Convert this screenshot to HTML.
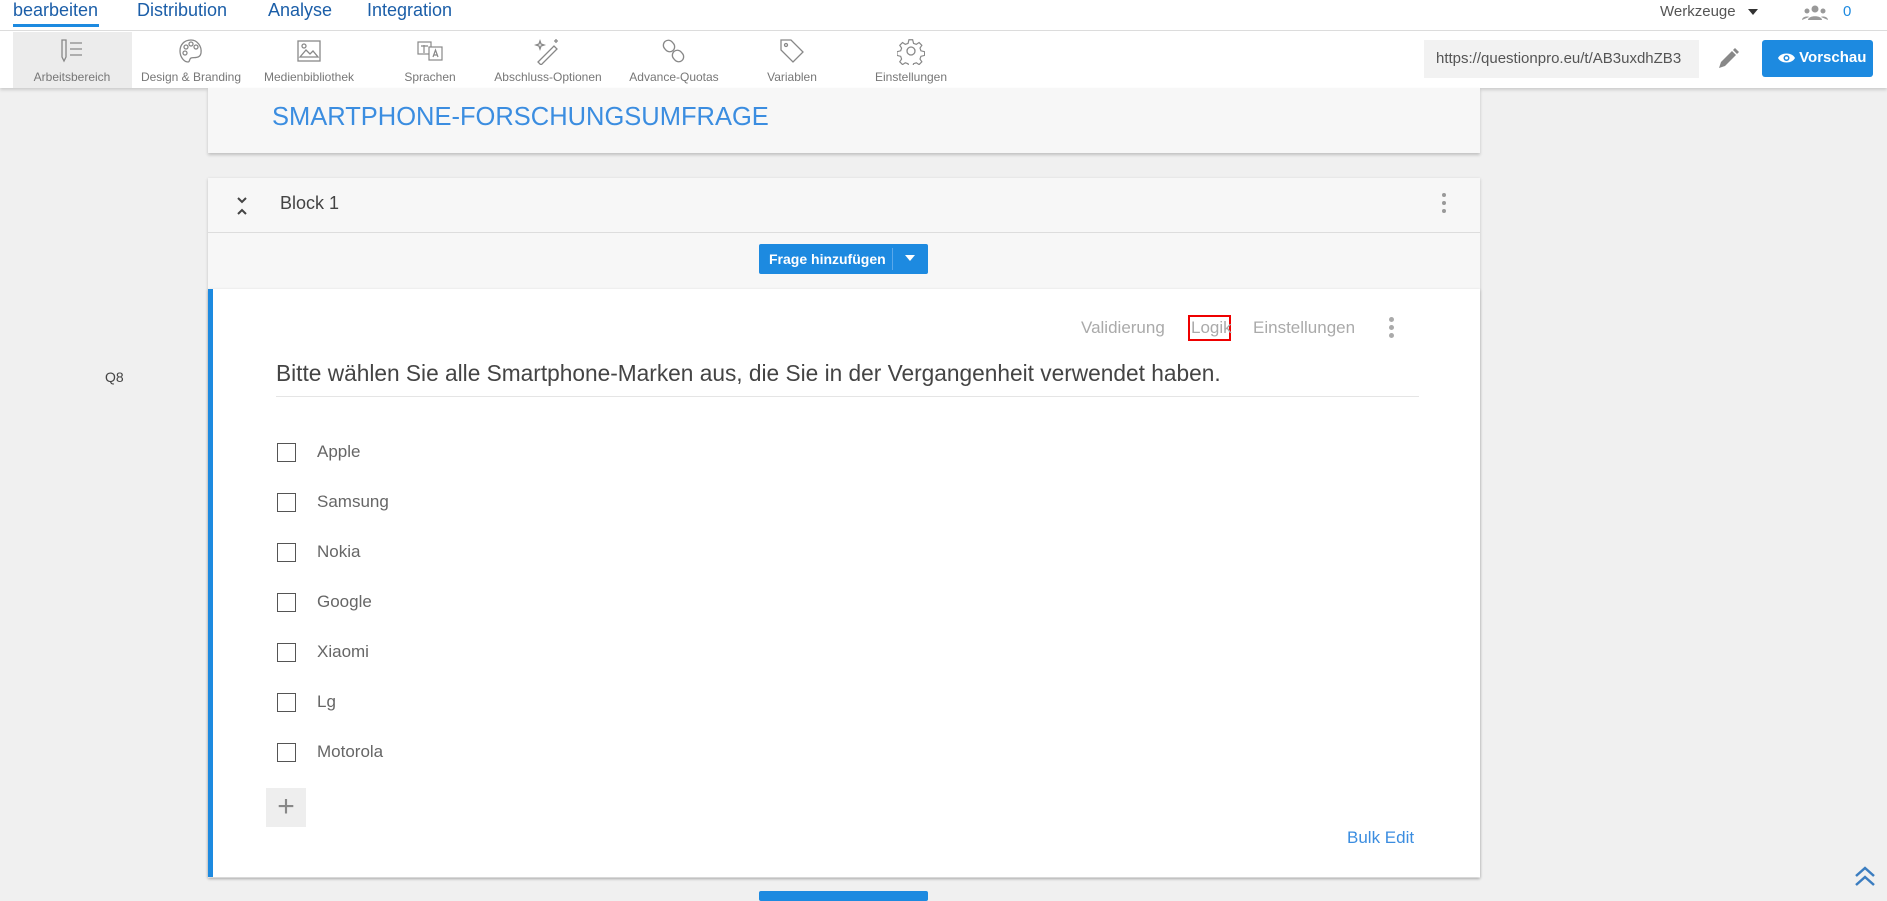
<!DOCTYPE html>
<html><head><meta charset="utf-8"><style>
*{margin:0;padding:0;box-sizing:border-box}
body{width:1887px;height:894px;overflow:hidden;background:#f0f0f0;font-family:"Liberation Sans",sans-serif;position:relative;color:#555}
.a{position:absolute;white-space:nowrap}
.tb{position:absolute;top:31px;width:110px;height:57px;text-align:center;font-size:12px;color:#777}
.tb svg{position:absolute;top:6px;left:41px}
.tb span{position:absolute;top:39px;left:0;right:0}
.opt{position:absolute;left:277px;width:19px;height:19px;border:1.5px solid #555;background:#fff}
.ol{position:absolute;left:317px;font-size:17px;color:#666}
</style></head><body>
<div class="a" style="left:0;top:0;width:1887px;height:31px;background:#fff;border-bottom:1px solid #ddd"></div>
<div class="a" style="left:13px;top:0;font-size:18px;color:#1b5ea8">bearbeiten</div>
<div class="a" style="left:13px;top:24px;width:86px;height:3px;background:#1d8ae0"></div>
<div class="a" style="left:137px;top:0;font-size:18px;color:#1b5ea8">Distribution</div>
<div class="a" style="left:268px;top:0;font-size:18px;color:#1b5ea8">Analyse</div>
<div class="a" style="left:367px;top:0;font-size:18px;color:#1b5ea8">Integration</div>
<div class="a" style="left:1660px;top:3px;font-size:15px;color:#555">Werkzeuge</div>
<div class="a" style="left:1748px;top:9px;border:5px solid transparent;border-top:6px solid #333"></div>
<svg class="a" style="left:1802px;top:4px" width="26" height="16" viewBox="0 0 26 16"><circle cx="13" cy="5" r="3.5" fill="#999"/><circle cx="5" cy="7" r="2.5" fill="#999"/><circle cx="21" cy="7" r="2.5" fill="#999"/><path d="M6 16c0-5 14-5 14 0z M0 16c0-4 7-4 7-3 M26 16c0-4-7-4-7-3" fill="#999"/></svg>
<div class="a" style="left:1843px;top:3px;font-size:15px;color:#1d8ae0">0</div>

<div class="a" style="left:0;top:31px;width:1887px;height:57px;background:#fff;box-shadow:0 2px 3px rgba(0,0,0,.15)"></div>
<div class="a" style="left:13px;top:32px;width:119px;height:56px;background:#ececec"></div>
<div class="tb" style="left:17px"><svg width="28" height="28" viewBox="0 0 28 28" fill="none" stroke="#888" stroke-width="1.3"><path d="M4 3h4v17l-2 4-2-4z M12 6h12 M12 12h12 M12 18h12"/></svg><span>Arbeitsbereich</span></div>
<div class="tb" style="left:136px"><svg width="28" height="28" viewBox="0 0 28 28" fill="none" stroke="#888" stroke-width="1.3"><path d="M14 3C7 3 3 8 3 14s4 11 8 11c2 0 1-3 3-4 3-1 9 1 10-5 1-7-4-13-10-13z"/><circle cx="9" cy="10" r="2"/><circle cx="14" cy="7" r="2"/><circle cx="19" cy="10" r="2"/><circle cx="8" cy="16" r="2"/></svg><span>Design &amp; Branding</span></div>
<div class="tb" style="left:254px"><svg width="28" height="28" viewBox="0 0 28 28" fill="none" stroke="#888" stroke-width="1.3"><rect x="3" y="4" width="22" height="20"/><path d="M5 20l6-7 4 4 3-3 5 6z"/><circle cx="9" cy="9" r="2"/></svg><span>Medienbibliothek</span></div>
<div class="tb" style="left:375px"><svg width="28" height="28" viewBox="0 0 28 28" fill="none" stroke="#888" stroke-width="1.2"><rect x="2" y="5" width="13" height="12"/><rect x="13" y="10" width="13" height="13" fill="#fff"/><path d="M5 9h7 M8 8v8 M17 20l2.5-7 2.5 7 M18 18h3"/></svg><span>Sprachen</span></div>
<div class="tb" style="left:493px"><svg width="28" height="28" viewBox="0 0 28 28" fill="none" stroke="#888" stroke-width="1.3"><path d="M4 25L20 9l3 3L7 28z M6 4l1 3 3 1-3 1-1 3-1-3-3-1 3-1z M22 2v4 M20 4h4"/></svg><span>Abschluss-Optionen</span></div>
<div class="tb" style="left:619px"><svg width="28" height="28" viewBox="0 0 28 28" fill="none" stroke="#888" stroke-width="1.3"><rect x="4" y="3" width="10" height="12" rx="5" transform="rotate(-40 9 9)"/><rect x="13" y="13" width="10" height="12" rx="5" transform="rotate(-40 18 19)"/></svg><span>Advance-Quotas</span></div>
<div class="tb" style="left:737px"><svg width="28" height="28" viewBox="0 0 28 28" fill="none" stroke="#888" stroke-width="1.3"><path d="M3 3h10l12 12-10 10L3 13z"/><circle cx="8" cy="8" r="1.5"/></svg><span>Variablen</span></div>
<div class="tb" style="left:856px"><svg width="28" height="28" viewBox="0 0 28 28" fill="none" stroke="#888" stroke-width="1.3"><circle cx="14" cy="14" r="4"/><path d="M12 2h4l1 4 3 1 3-2 3 3-2 3 1 3 4 1v4l-4 1-1 3 2 3-3 3-3-2-3 1-1 4h-4l-1-4-3-1-3 2-3-3 2-3-1-3-4-1v-4l4-1 1-3-2-3 3-3 3 2 3-1z" transform="scale(.92) translate(1 1)"/></svg><span>Einstellungen</span></div>

<div class="a" style="left:1424px;top:40px;width:275px;height:38px;background:#f2f2f2;font-size:15px;color:#555;padding:10px 0 0 12px;overflow:hidden">https://questionpro.eu/t/AB3uxdhZB3</div>
<svg class="a" style="left:1717px;top:46px" width="22" height="24" viewBox="0 0 22 24"><path d="M2 22l2-6L15 5l4 4L8 20z M16 4l2-2 4 4-2 2z" fill="#888"/></svg>
<div class="a" style="left:1762px;top:40px;width:111px;height:37px;background:#1d8ae0;border-radius:3px;color:#fff;font-size:15px;font-weight:bold;padding:9px 0 0 16px">
<svg style="vertical-align:-2px" width="17" height="12" viewBox="0 0 17 12"><path d="M0 6C3 0 14 0 17 6 14 12 3 12 0 6z" fill="#fff"/><circle cx="8.5" cy="6" r="3" fill="#1d8ae0"/><circle cx="8.5" cy="6" r="1.5" fill="#fff"/></svg> Vorschau</div>

<div class="a" style="left:208px;top:88px;width:1272px;height:65px;background:#f7f7f7;box-shadow:0 2px 3px rgba(0,0,0,.2)"></div>
<div class="a" style="left:272px;top:103px;font-size:25.5px;color:#3b8de0">SMARTPHONE-FORSCHUNGSUMFRAGE</div>

<div class="a" style="left:208px;top:178px;width:1272px;height:700px;background:#f7f7f7;box-shadow:0 1px 3px rgba(0,0,0,.2)"></div>
<div class="a" style="left:208px;top:232px;width:1272px;height:1px;background:#ddd"></div>
<svg class="a" style="left:236px;top:196px" width="12" height="20" viewBox="0 0 12 20" fill="none" stroke="#444" stroke-width="2"><path d="M2 2l4 4 4-4 M2 18l4-4 4 4"/></svg>
<div class="a" style="left:280px;top:193px;font-size:18px;color:#444">Block 1</div>
<div class="a" style="left:1442px;top:193px;width:4px;height:4px;border-radius:2px;background:#999;box-shadow:0 8px 0 #999,0 16px 0 #999"></div>
<div class="a" style="left:759px;top:244px;width:169px;height:30px;background:#1d8ae0;border-radius:2px;color:#fff;font-size:14px;font-weight:bold;padding:7px 0 0 10px">Frage hinzufügen</div>
<div class="a" style="left:892px;top:248px;width:1px;height:22px;background:#5aa8ea"></div>
<div class="a" style="left:905px;top:255px;border:5px solid transparent;border-top:6px solid #fff"></div>

<div class="a" style="left:208px;top:289px;width:1272px;height:588px;background:#fff;border-left:5px solid #1d8ae0;box-shadow:0 1px 3px rgba(0,0,0,.2)"></div>
<div class="a" style="left:105px;top:369px;font-size:14px;color:#444">Q8</div>
<div class="a" style="left:1081px;top:318px;font-size:17px;color:#aaa">Validierung</div>
<div class="a" style="left:1188px;top:315px;width:43px;height:26px;border:2px solid #e00"></div>
<div class="a" style="left:1191px;top:318px;font-size:17px;color:#aaa">Logik</div>
<div class="a" style="left:1253px;top:318px;font-size:17px;color:#aaa">Einstellungen</div>
<div class="a" style="left:1389px;top:317px;width:5px;height:5px;border-radius:3px;background:#aaa;box-shadow:0 8px 0 #aaa,0 16px 0 #aaa"></div>
<div class="a" style="left:276px;top:360px;font-size:22.7px;color:#444">Bitte wählen Sie alle Smartphone-Marken aus, die Sie in der Vergangenheit verwendet haben.</div>
<div class="a" style="left:276px;top:396px;width:1143px;height:1px;background:#e5e5e5"></div>

<div class="opt" style="top:443px"></div><div class="ol" style="top:442px">Apple</div>
<div class="opt" style="top:493px"></div><div class="ol" style="top:492px">Samsung</div>
<div class="opt" style="top:543px"></div><div class="ol" style="top:542px">Nokia</div>
<div class="opt" style="top:593px"></div><div class="ol" style="top:592px">Google</div>
<div class="opt" style="top:643px"></div><div class="ol" style="top:642px">Xiaomi</div>
<div class="opt" style="top:693px"></div><div class="ol" style="top:692px">Lg</div>
<div class="opt" style="top:743px"></div><div class="ol" style="top:742px">Motorola</div>
<div class="a" style="left:266px;top:788px;width:40px;height:39px;background:#eee;color:#888;font-size:30px;text-align:center;line-height:37px">+</div>
<div class="a" style="left:1347px;top:828px;font-size:17px;color:#3b8de0">Bulk Edit</div>
<div class="a" style="left:759px;top:891px;width:169px;height:10px;background:#1d8ae0;border-radius:2px"></div>
<svg class="a" style="left:1853px;top:864px" width="24" height="24" viewBox="0 0 24 24" fill="none" stroke="#3b7dc0" stroke-width="2.5"><path d="M3 12l9-8 9 8 M3 21l9-8 9 8"/></svg>
</body></html>
